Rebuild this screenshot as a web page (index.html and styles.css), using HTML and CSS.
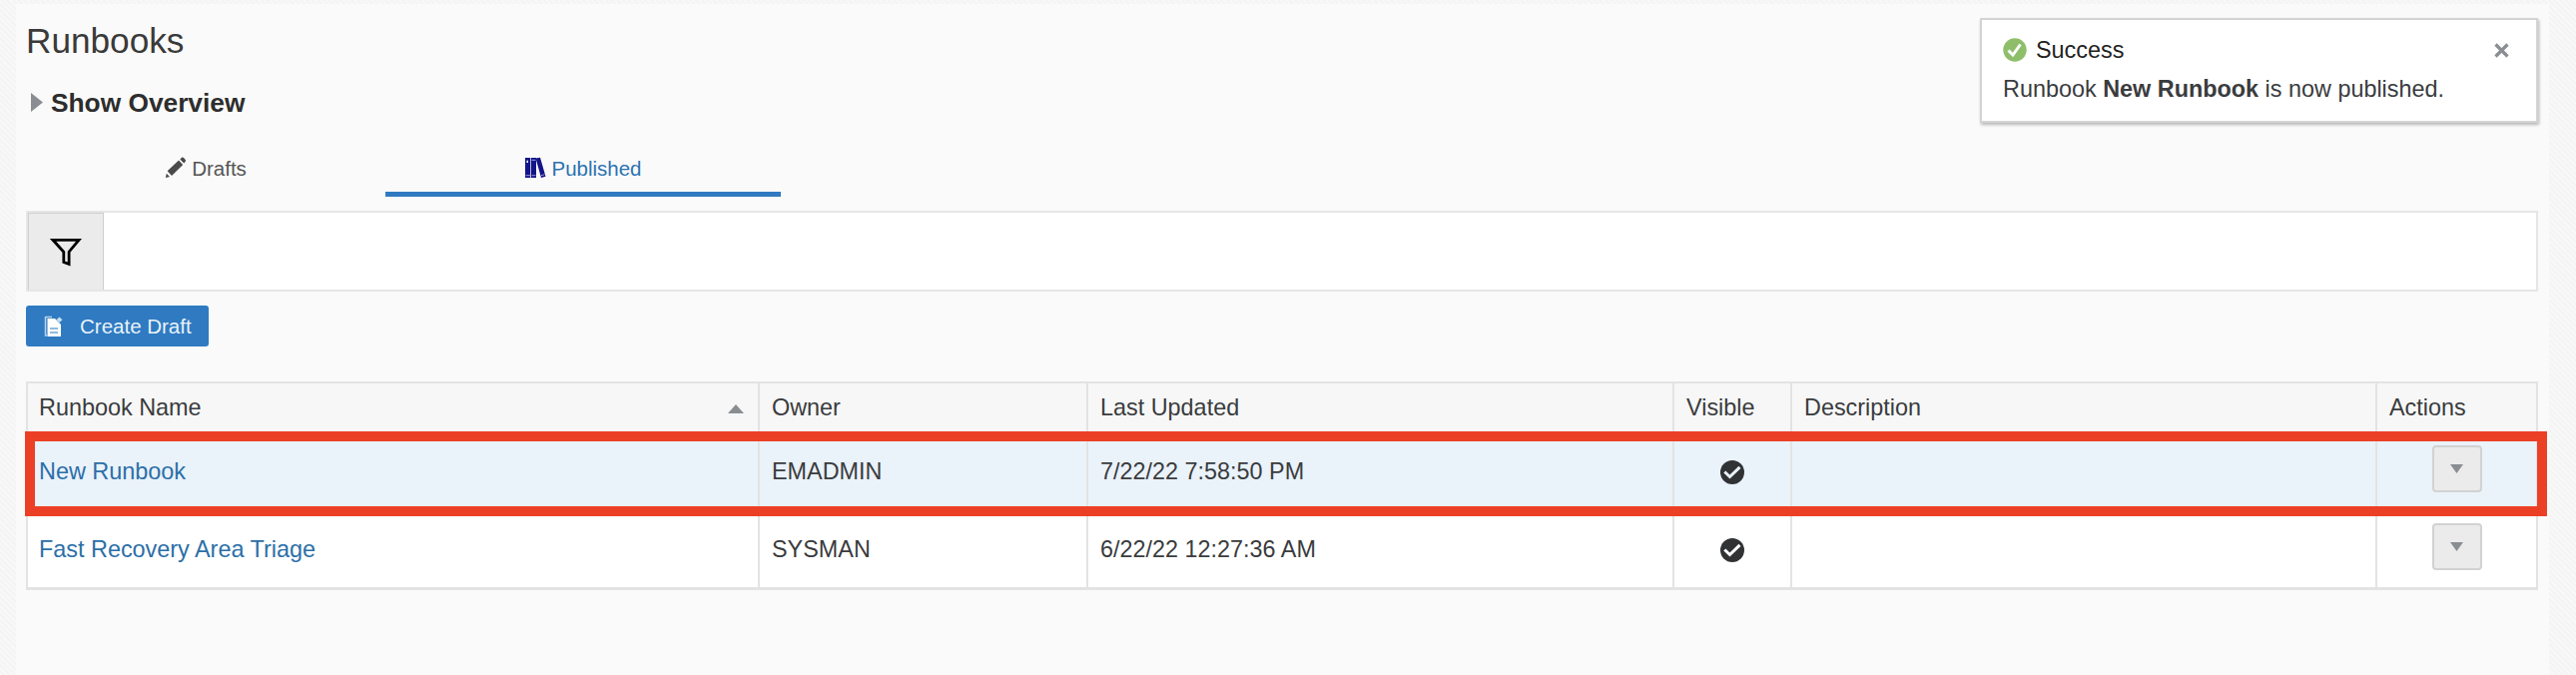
FILE: index.html
```html
<!DOCTYPE html>
<html lang="en">
<head>
<meta charset="utf-8">
<title>Runbooks</title>
<link rel="stylesheet" href="styles.css">
</head>
<body>
<main class="page">
  <h1 class="title">Runbooks</h1>
  <div class="overview">
    <svg class="disclosure" width="12" height="20" viewBox="0 0 12 20"><path d="M0 0L12 9.5L0 19Z" fill="#8a8d91"/></svg>
    <span>Show Overview</span>
  </div>
  <nav class="tabs">
    <a class="tab">
      <svg width="22" height="22" viewBox="0 0 22 22" fill="#4a4a4a"><path d="M.8 21L1.800 16.800L5 20Z"/><path d="M2.600 14.300L14 3.600L18.200 8L7 19Z"/><path d="M15.300 2.400L17 .8Q18 0 19 1L20.500 2.800Q21.500 3.800 20.700 4.700L19.200 6.500Z"/></svg>
      <span>Drafts</span>
    </a>
    <a class="tab selected">
      <svg width="22" height="22" viewBox="0 0 22 22"><path d="M1 1H6.300V21H1ZM7 1H12V21H7ZM11.500 1.500L16 .7L21.500 19.700L17 21Z" fill="#14148a"/><path d="M2.500 4H4M1.500 18.700H6M7.500 3.300H11.500M7.500 18.700H11.500M17 18.700L20.500 17.700" stroke="#a9a9dc" stroke-width=".9"/><path d="M2.500 5H4" stroke="#fff" stroke-width="2"/></svg>
      <span>Published</span>
    </a>
  </nav>
  <section class="filter">
    <button class="filter-button"><svg width="34" height="32" viewBox="0 0 34 32"><path d="M4 2.300H30L20.100 14.200V26.500L14.800 24.500V14.200Z" fill="none" stroke="#000" stroke-width="2.800"/></svg></button>
  </section>
  <button class="create">
    <svg width="20" height="22" viewBox="0 0 20 22"><path d="M1.500 1.500H8M1.500 1V20H3" fill="none" stroke="#b9d4ec" stroke-width="1.500"/><path d="M3.500 3H11L17 9V21H3.500Z" fill="#fff"/><path d="M6 13H14M6 17H14" stroke="#6ea5d6" stroke-width="1.300"/><path d="M15.500 1.500L18.500 4.200L15.500 7L12.500 4.200Z" fill="#c9def0"/></svg>
    <span>Create Draft</span>
  </button>
  <div class="table">
    <div class="row head">
      <div class="cell">Runbook Name<svg class="sort" width="16" height="9" viewBox="0 0 16 9"><path d="M0 9L8 0L16 9Z" fill="#8a8d91"/></svg></div>
      <div class="cell">Owner</div>
      <div class="cell">Last Updated</div>
      <div class="cell">Visible</div>
      <div class="cell">Description</div>
      <div class="cell">Actions</div>
    </div>
    <div class="row current">
      <div class="cell"><a class="link">New Runbook</a></div>
      <div class="cell">EMADMIN</div>
      <div class="cell">7/22/22 7:58:50 PM</div>
      <div class="cell center"><svg class="check" width="24" height="24" viewBox="0 0 24 24"><circle cx="12" cy="12" r="12" fill="#303234"/><path d="M4.300 11.500L9.500 16.500L19.500 6.800" fill="none" stroke="#eaf2fa" stroke-width="3"/></svg></div>
      <div class="cell"></div>
      <div class="cell actions"><button class="menu"><svg width="13" height="9" viewBox="0 0 13 9"><path d="M0 0H13L6.500 9Z" fill="#8a8d91"/></svg></button></div>
    </div>
    <div class="row">
      <div class="cell"><a class="link">Fast Recovery Area Triage</a></div>
      <div class="cell">SYSMAN</div>
      <div class="cell">6/22/22 12:27:36 AM</div>
      <div class="cell center"><svg class="check" width="24" height="24" viewBox="0 0 24 24"><circle cx="12" cy="12" r="12" fill="#303234"/><path d="M4.300 11.500L9.500 16.500L19.500 6.800" fill="none" stroke="#fff" stroke-width="3"/></svg></div>
      <div class="cell"></div>
      <div class="cell actions"><button class="menu"><svg width="13" height="9" viewBox="0 0 13 9"><path d="M0 0H13L6.500 9Z" fill="#8a8d91"/></svg></button></div>
    </div>
    <div class="highlight"></div>
  </div>
</main>
<aside class="toast">
  <div class="toast-head">
    <svg width="24" height="24" viewBox="0 0 24 24"><circle cx="12" cy="12" r="11.700" fill="#8fbe6a"/><path d="M5.500 12.500L10 17L17.500 6.500" fill="none" stroke="#fff" stroke-width="3"/></svg>
    <span>Success</span>
    <svg class="close" width="15" height="15" viewBox="0 0 15 15"><path d="M1.500 1.500L13.500 13.500M13.500 1.500L1.500 13.500" stroke="#8a8d91" stroke-width="3.200"/></svg>
  </div>
  <p class="toast-text">Runbook <b>New Runbook</b> is now published.</p>
</aside>
</body>
</html>
```
FILE: styles.css
```css
* { box-sizing: border-box; }
body {
  margin: 0;
  height: 676px;
  overflow: hidden;
  padding: 4px 27px 0 16px;
  background: repeating-linear-gradient(45deg, #f8f8f8 0 2px, #f4f4f4 2px 4px);
  font-family: "Liberation Sans", Arial, sans-serif;
  font-size: 23.4px;
  color: #3a3c3e;
}
svg { display: block; flex: none; }
button { font: inherit; padding: 0; border: 0; }
.page { height: 672px; padding: 16px 11px 0 10px; background: #fafafa; }
.title { margin: 0; font-size: 35.2px; line-height: 42px; font-weight: 400; color: #3a3a3a; }
.overview { display: flex; align-items: center; gap: 8px; height: 30px; margin-top: 26px; padding-left: 5px; font-size: 26.3px; line-height: 30px; font-weight: 700; color: #2d2d2d; }
.tabs { display: flex; height: 57px; margin-top: 22px; margin-left: -36px; }
.tab { display: flex; justify-content: center; width: 396px; height: 57px; padding-top: 17px; gap: 5px; font-size: 20.5px; line-height: 24px; color: #555; padding-left: 36px; }
.tab.selected { color: #2c73b0; border-bottom: 5px solid #2f7ac1; padding-left: 0; }
.filter { height: 81px; margin-top: 14px; border: 2px solid #e6e6e6; background: #fff; display: flex; }
.filter-button { width: 76px; height: 77px; display: flex; align-items: center; justify-content: center; padding-top: 4px; background: #ebebeb; border: 1px solid #cfcfcf; border-bottom: 0; }
.create { display: flex; align-items: center; gap: 16px; width: 183px; height: 41px; margin-top: 14px; padding-left: 18px; border-radius: 3px; background: #2f7ac1; color: #e9f2fa; font-size: 20.5px; }
.table { position: relative; margin-top: 35px; border: 2px solid #e3e3e3; border-bottom-width: 3px; background: #fff; }
.row { display: grid; grid-template-columns: 733px 329px 587px 118px 586px 1fr; height: 77px; }
.row.head { height: 50px; background: #f7f7f7; }
.row.current { background: #eaf2fa; }
.cell { display: flex; padding: 25px 12px 0; line-height: 27px; border-right: 2px solid #e3e3e3; white-space: nowrap; }
.cell:first-child { padding-left: 11px; }
.cell:last-child { border-right: 0; }
.head .cell { padding-top: 11px; }
.row:nth-child(3) .cell { padding-top: 26px; }
.sort { margin: 10px 2px 0 auto; }
.link { color: #2c6fa8; }
.center { justify-content: center; padding-left: 0; padding-right: 0; }
.check { margin-top: 2px; }
.row .cell.actions, .row:nth-child(3) .cell.actions { justify-content: center; padding: 12px 0 0; }
.menu { display: flex; align-items: center; justify-content: center; width: 50px; height: 47px; border: 2px solid #d2d2d2; border-radius: 4px; background: #ebebeb; }
.row:nth-child(3) .menu { margin-top: 1px; }
.highlight { position: absolute; left: -3px; top: 48px; width: 2526px; height: 85px; border: 10px solid #ec4026; }
.toast { position: absolute; left: 1983px; top: 18px; width: 559px; height: 105px; padding: 18px 27px 0 21px; border: 2px solid #d3d3d3; background: #fff; box-shadow: 1px 2px 3px rgba(0,0,0,.28); }
.toast-head { display: flex; align-items: center; gap: 9px; height: 24px; line-height: 24px; color: #222; }
.close { margin-left: auto; }
.toast-text { margin: 14px 0 0; line-height: 27px; white-space: nowrap; }
```
